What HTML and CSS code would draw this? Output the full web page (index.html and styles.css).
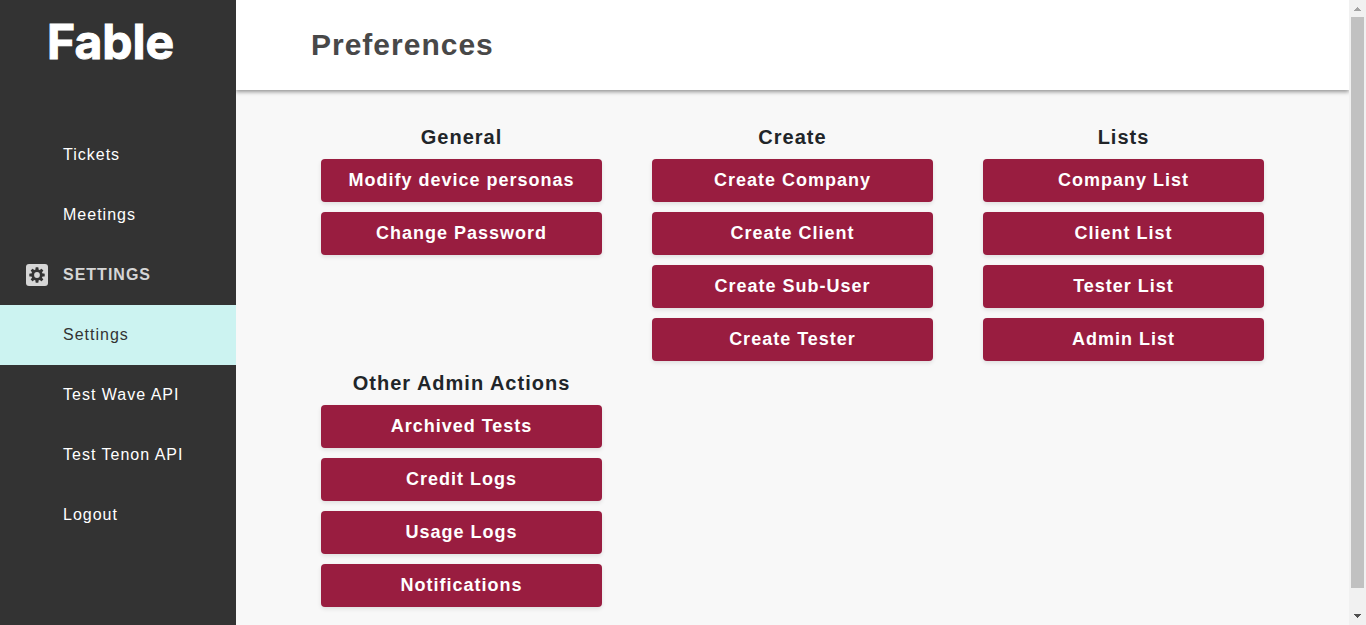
FILE: index.html
```html
<!DOCTYPE html>
<html lang="en">
<head>
<meta charset="utf-8">
<meta name="viewport" content="width=device-width, initial-scale=1">
<title>Preferences</title>
<link rel="stylesheet" href="styles.css">
</head>
<body>
<div class="app">
  <aside class="sidebar">
    <a class="logo" href="#">Fable</a>
    <nav class="nav">
      <a class="nav-item" href="#">Tickets</a>
      <a class="nav-item" href="#">Meetings</a>
      <h2 class="nav-heading">
        <svg class="nav-icon" viewBox="0 0 22 22" aria-hidden="true">
          <rect width="22" height="22" rx="3" fill="#d6d6d6"/>
          <g fill="#333">
            <circle cx="11" cy="11" r="5.7"/>
            <rect x="9.5" y="3.3" width="3" height="15.4" rx="0.6"/>
            <rect x="9.5" y="3.3" width="3" height="15.4" rx="0.6" transform="rotate(45 11 11)"/>
            <rect x="9.5" y="3.3" width="3" height="15.4" rx="0.6" transform="rotate(90 11 11)"/>
            <rect x="9.5" y="3.3" width="3" height="15.4" rx="0.6" transform="rotate(135 11 11)"/>
          </g>
          <circle cx="11" cy="11" r="2.9" fill="#d6d6d6"/>
        </svg>
        SETTINGS
      </h2>
      <a class="nav-item active" href="#" aria-current="page">Settings</a>
      <a class="nav-item" href="#">Test Wave API</a>
      <a class="nav-item" href="#">Test Tenon API</a>
      <a class="nav-item" href="#">Logout</a>
    </nav>
  </aside>
  <div class="page">
    <header class="header"><h1 class="title">Preferences</h1></header>
    <main class="groups">
      <section class="group">
        <h2 class="group-title">General</h2>
        <button class="action" type="button">Modify device personas</button>
        <button class="action" type="button">Change Password</button>
      </section>
      <section class="group">
        <h2 class="group-title">Create</h2>
        <button class="action" type="button">Create Company</button>
        <button class="action" type="button">Create Client</button>
        <button class="action" type="button">Create Sub-User</button>
        <button class="action" type="button">Create Tester</button>
      </section>
      <section class="group">
        <h2 class="group-title">Lists</h2>
        <button class="action" type="button">Company List</button>
        <button class="action" type="button">Client List</button>
        <button class="action" type="button">Tester List</button>
        <button class="action" type="button">Admin List</button>
      </section>
      <section class="group">
        <h2 class="group-title">Other Admin Actions</h2>
        <button class="action" type="button">Archived Tests</button>
        <button class="action" type="button">Credit Logs</button>
        <button class="action" type="button">Usage Logs</button>
        <button class="action" type="button">Notifications</button>
      </section>
    </main>
  </div>
  <div class="scrollbar" aria-hidden="true">
    <svg class="arrow" viewBox="0 0 17 17"><path d="M8 7h1v1h1v1h1v1h1v1H5v-1h1V9h1V8h1z" fill="#a3a3a3"/></svg>
    <div class="track"><div class="thumb"></div></div>
    <svg class="arrow" viewBox="0 0 17 17"><path d="M5 6h7v1h-1v1h-1v1H9v1H8V9H7V8H6V7H5z" fill="#505050"/></svg>
  </div>
</div>
</body>
</html>
```
FILE: styles.css
```css
* {
  box-sizing: border-box;
}

body {
  margin: 0;
  font-family: "Liberation Sans", Arial, sans-serif;
  font-size: 16px;
  letter-spacing: 1px;
  color: #212529;
  background: #f8f8f8;
}

.app {
  display: flex;
  min-height: 100vh;
}

.sidebar {
  flex: 0 0 236px;
  background: #333;
}

.logo {
  display: block;
  padding: 12px 0 0 47px;
  height: 125px;
  font-family: Inter, sans-serif;
  font-size: 48px;
  font-weight: 700;
  line-height: 60px;
  letter-spacing: normal;
  color: #fff;
  -webkit-text-stroke: 1px #fff;
  text-decoration: none;
}

.nav {
  display: flex;
  flex-direction: column;
}

.nav-item,
.nav-heading {
  display: flex;
  align-items: center;
  height: 60px;
  margin: 0;
  padding-left: 63px;
  font-size: 16px;
  color: #fff;
  text-decoration: none;
}

.nav-heading {
  gap: 15px;
  padding-left: 26px;
  color: #d6d6d6;
}

.nav-icon {
  width: 22px;
  height: 22px;
}

.nav-item.active {
  background: #ccf3f1;
  color: #333;
}

.page {
  flex: 1;
  min-width: 0;
}

.header {
  display: flex;
  align-items: center;
  height: 90px;
  padding: 0 75px;
  background: #fff;
  box-shadow: 0 2px 4px rgba(0, 0, 0, 0.4);
  clip-path: inset(0 0 -8px 0);
}

.title {
  margin: 0;
  font-size: 30px;
  color: #484848;
}

.groups {
  display: grid;
  grid-template-columns: repeat(3, 1fr);
  padding: 35px 60px 8px;
}

.group {
  display: flex;
  flex-direction: column;
  gap: 10px;
  padding: 0 25px 10px;
}

.group-title {
  margin: 0;
  font-size: 20px;
  line-height: 24px;
  text-align: center;
}

.action {
  padding: 8px;
  border: 0;
  border-radius: 4px;
  background: #991d40;
  box-shadow: 0 2px 4px rgba(0, 0, 0, 0.1);
  font: bold 18px/27px "Liberation Sans", Arial, sans-serif;
  letter-spacing: inherit;
  color: #fff;
}

.scrollbar {
  position: sticky;
  top: 0;
  display: flex;
  flex: 0 0 17px;
  flex-direction: column;
  height: 100vh;
  background: #f1f1f1;
}

.arrow {
  flex: none;
  width: 17px;
  height: 17px;
}

.track {
  flex: 1;
  padding: 0 2px 20px;
}

.thumb {
  height: 100%;
  background: #c1c1c1;
}
```
